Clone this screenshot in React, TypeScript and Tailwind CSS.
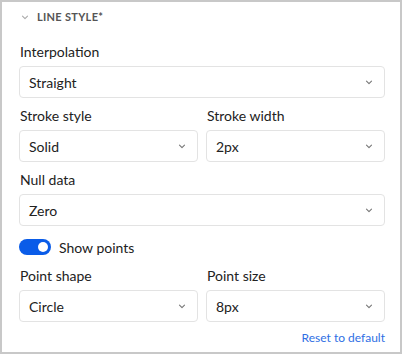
import React from "react";

const Chevron = ({ className = "" }: { className?: string }) => (
  <svg width="8" height="5" viewBox="0 0 8 5" className={className} fill="none">
    <path d="M1.5 1.2l2.5 2.5 2.5-2.5" stroke="currentColor" strokeWidth="1.1" strokeLinecap="round" strokeLinejoin="round" />
  </svg>
);

const Select = ({ value }: { value: string }) => (
  <div className="mt-1 flex h-8 items-center justify-between rounded-[4px] border border-[#e3e3e3] bg-white pl-[9px] pr-[11px] text-[14px] text-[#222]">
    <span>{value}</span>
    <Chevron className="text-[#777]" />
  </div>
);

const Field = ({ label, value, className = "" }: { label: string; value: string; className?: string }) => (
  <div className={className}>
    <div className="h-5 pl-[1px] text-[14px] leading-5 text-[#222]">{label}</div>
    <Select value={value} />
  </div>
);

export default function App() {
  return (
    <div
      className="flex h-[354px] w-[402px] flex-col border-2 border-[#c8c8c8] bg-white pl-[17px] pr-[15px]"
      style={{ fontFamily: "Lato, 'Liberation Sans', sans-serif" }}
    >
      <div className="mt-[5px] flex h-5 items-center gap-[8px]">
        <Chevron className="ml-[2px] text-[#aaa]" />
        <span className="text-[11px] font-bold tracking-[0.3px] text-[#555]">LINE STYLE*</span>
      </div>
      <Field className="mt-[15px]" label="Interpolation" value="Straight" />
      <div className="mt-2 grid grid-cols-2 gap-2">
        <Field label="Stroke style" value="Solid" />
        <Field label="Stroke width" value="2px" />
      </div>
      <Field className="mt-2" label="Null data" value="Zero" />
      <div className="mt-[11px] flex h-5 items-center gap-2">
        <div className="relative h-4 w-8 rounded-full bg-[#0a5ce8]">
          <div className="absolute right-[3px] top-[3px] h-[10px] w-[10px] rounded-full bg-white" />
        </div>
        <span className="text-[14px] text-[#222]">Show points</span>
      </div>
      <div className="mt-[9px] grid grid-cols-2 gap-2">
        <Field label="Point shape" value="Circle" />
        <Field label="Point size" value="8px" />
      </div>
      <div className="mt-[6px] flex h-5 items-center justify-end">
        <span className="text-[12px] text-[#2f6fe4]">Reset to default</span>
      </div>
    </div>
  );
}
